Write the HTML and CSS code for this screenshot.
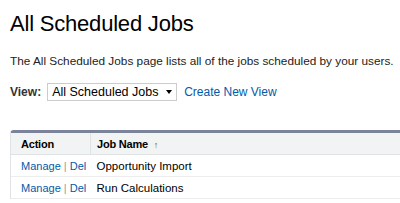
FILE: index.html
```html
<!DOCTYPE html>
<html lang="en">

<head>
    <meta charset="UTF-8">
    <title>All Scheduled Jobs</title>
    <link rel="stylesheet" href="styles.css">
</head>

<body>
    <h1 class="pageTitle">All Scheduled Jobs</h1>
    <p class="pageDesc">The All Scheduled Jobs page lists all of the jobs scheduled by your users.</p>

    <div class="viewBar">
        <label class="viewLabel">View:</label>
        <div class="viewSelect">
            <span>All Scheduled Jobs</span>
            <span class="caret"></span>
        </div>
        <a href="#" class="link">Create New View</a>
    </div>

    <div class="listBox">
        <table class="jobTable">
            <tr class="headRow">
                <th class="actionCol">Action</th>
                <th>Job Name <span class="sortArrow">&#8593;</span></th>
            </tr>
            <tr>
                <td class="actionCol"><a href="#" class="link">Manage</a> <span class="sep">|</span> <a href="#" class="link">Del</a></td>
                <td>Opportunity Import</td>
            </tr>
            <tr>
                <td class="actionCol"><a href="#" class="link">Manage</a> <span class="sep">|</span> <a href="#" class="link">Del</a></td>
                <td>Run Calculations</td>
            </tr>
        </table>
    </div>
</body>

</html>
```

FILE: styles.css
```css
body {
    margin: 0;
    padding: 0 0 0 10px;
    font-family: Arial, "Liberation Sans", sans-serif;
    color: #222;
    background: #fff;
    overflow: hidden;
}

.pageTitle {
    font-size: 22px;
    letter-spacing: -0.2px;
    font-weight: normal;
    color: #000;
    margin: 0;
    padding-top: 11px;
    line-height: 26px;
}

.pageDesc {
    font-size: 11.8px;
    white-space: nowrap;
    margin: 17px 0 0 0;
    line-height: 14px;
}

.viewBar {
    display: flex;
    align-items: center;
    margin-top: 15px;
    font-size: 12px;
    white-space: nowrap;
}

.viewLabel {
    font-weight: bold;
    color: #333;
    margin-right: 6px;
}

.viewSelect {
    display: flex;
    align-items: center;
    justify-content: space-between;
    width: 120px;
    height: 16px;
    padding: 0 4px;
    border: 1px solid #ccc;
    font-size: 12.5px;
    color: #000;
    margin-right: 7px;
}

.caret {
    width: 0;
    height: 0;
    border-left: 3px solid transparent;
    border-right: 3px solid transparent;
    border-top: 4px solid #000;
}

.link {
    color: #015ba7;
    text-decoration: none;
}

.listBox {
    margin-top: 29px;
    border-top: 3px solid #7a8399;
    border-left: 1px solid #e0e3e5;
    border-radius: 4px 0 0 0;
}

.jobTable {
    border-collapse: collapse;
    width: 100%;
    font-size: 11.5px;
    table-layout: fixed;
}

.jobTable th,
.jobTable td {
    text-align: left;
    height: 21px;
    padding: 0 0 0 6px;
    border-bottom: 1px solid #ededed;
    color: #000;
    white-space: nowrap;
    overflow: hidden;
}

.headRow {
    background-color: #f2f3f3;
}

.headRow th {
    font-size: 11px;
    letter-spacing: -0.2px;
    border-bottom: 1px solid #e0e3e5;
}

.jobTable .actionCol {
    width: 69px;
    padding-left: 10px;
}

.headRow th.actionCol {
    border-right: 1px solid #e0e3e5;
}

td.actionCol {
    font-size: 11px;
}

.sortArrow {
    font-size: 9px;
    font-weight: bold;
    color: #555;
    margin-left: 3px;
}

.sep {
    color: #999;
}
```
